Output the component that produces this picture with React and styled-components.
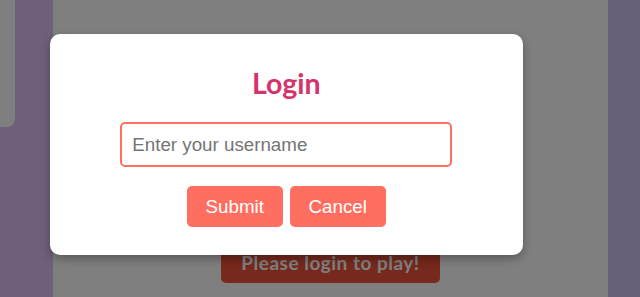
import React from "react";
import styled, { createGlobalStyle } from "styled-components";

const GlobalStyle = createGlobalStyle`
  html, body { margin: 0; padding: 0; }
  body {
    font-family: "Liberation Sans", Arial, sans-serif;
    overflow: hidden;
  }
  * { box-sizing: border-box; }
`;

const Page = styled.div`
  position: relative;
  display: flex;
  align-items: flex-start;
  width: 640px;
  height: 297px;
  background: linear-gradient(90deg, #dfbff5 0%, #cec0f2 100%);
`;

const SidePanel = styled.aside`
  flex: 0 0 15px;
  height: 127px;
  background: #ffffff;
  border-bottom-right-radius: 8px;
`;

const Main = styled.main`
  flex: 0 0 555px;
  margin-left: 38px;
  height: 297px;
  background: #ffffff;
  display: flex;
  flex-direction: column;
  align-items: center;
  padding-top: 244px;
`;

const PlayButton = styled.button`
  border: none;
  border-radius: 5px;
  background: #ec5238;
  color: #ffffff;
  font-family: "Comic Sans MS", Lato, sans-serif;
  font-weight: 700;
  font-size: 19px;
  letter-spacing: 0.5px;
  width: 219px;
  height: 39px;
  padding: 0 0 3px;
  cursor: pointer;
`;

const Overlay = styled.div`
  position: absolute;
  inset: 0;
  background: rgba(0, 0, 0, 0.5);
  display: flex;
  align-items: flex-start;
  padding: 34px 0 0 49.5px;
`;

const Modal = styled.div`
  width: 473.5px;
  background: #ffffff;
  border-radius: 10px;
  box-shadow: 0 4px 10px rgba(0, 0, 0, 0.3);
  display: flex;
  flex-direction: column;
  align-items: center;
  padding: 32px 0 28px;
`;

const Title = styled.h2`
  margin: 0;
  font-family: "Comic Sans MS", Lato, sans-serif;
  font-weight: 700;
  font-size: 28.5px;
  line-height: 34px;
  color: #d6336c;
`;

const Input = styled.input`
  margin-top: 22px;
  width: 332px;
  height: 45px;
  border: 2px solid #ff6f61;
  border-radius: 5px;
  padding: 0 10px;
  font-family: "Liberation Sans", Arial, sans-serif;
  font-size: 18.75px;
  color: #333;
  outline: none;
  &::placeholder { color: #757575; }
`;

const Actions = styled.div`
  margin-top: 19px;
  display: flex;
  gap: 7px;
`;

const ActionButton = styled.button`
  width: 96px;
  height: 41px;
  border: none;
  border-radius: 5px;
  background: #ff6f61;
  color: #ffffff;
  font-family: "Liberation Sans", Arial, sans-serif;
  font-size: 18.75px;
  padding: 0;
  cursor: pointer;
`;

export default function App() {
  return (
    <>
      <GlobalStyle />
      <Page>
        <SidePanel />
        <Main>
          <PlayButton>Please login to play!</PlayButton>
        </Main>
        <Overlay>
          <Modal>
            <Title>Login</Title>
            <Input placeholder="Enter your username" />
            <Actions>
              <ActionButton>Submit</ActionButton>
              <ActionButton>Cancel</ActionButton>
            </Actions>
          </Modal>
        </Overlay>
      </Page>
    </>
  );
}
